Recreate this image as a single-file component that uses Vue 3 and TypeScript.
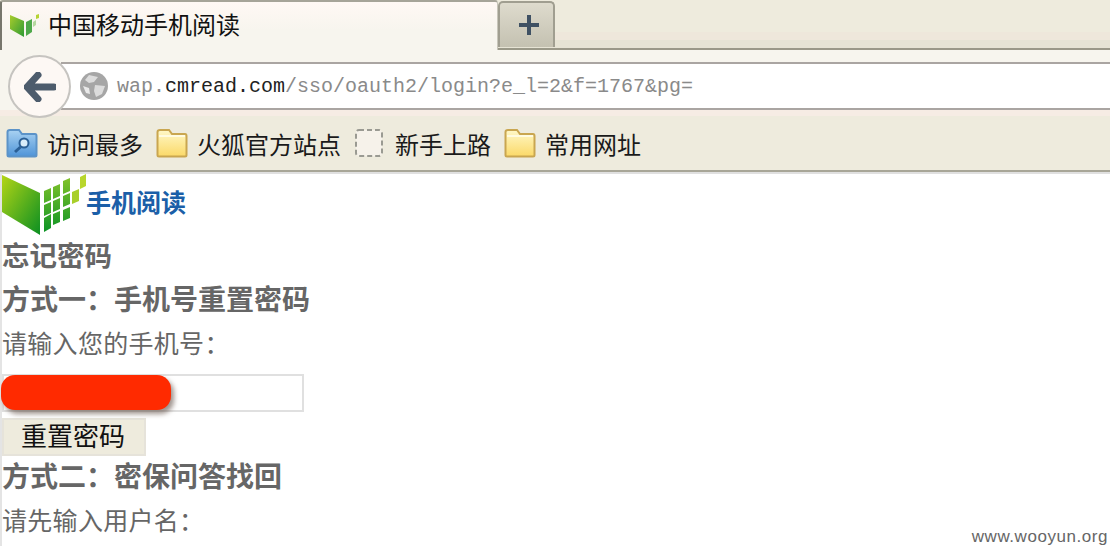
<script setup lang="ts">
interface Bookmark {
  label: string;
  icon: 'search' | 'folder' | 'blank';
}

const bookmarks: Bookmark[] = [
  { label: '访问最多', icon: 'search' },
  { label: '火狐官方站点', icon: 'folder' },
  { label: '新手上路', icon: 'blank' },
  { label: '常用网址', icon: 'folder' },
];

// skewed tiles of the logo, in page coordinates: x, y, width, height, rise
const tiles: number[][] = [
  [44, 191, 7, 12, -3],
  [44, 205, 7, 11, -3],
  [44, 218, 7, 14, -4],
  [53, 187, 7, 12, -3],
  [53, 201, 7, 11, -3],
  [53, 214, 7, 11, -3],
  [63, 181, 7, 13, -3],
  [63, 196, 7, 11, -3],
  [63, 210, 7, 11, -3],
];
</script>

<template>
  <div class="window">
    <div class="tabstrip">
      <div class="tab">
        <svg class="favicon" viewBox="0 0 30 24">
          <defs>
            <linearGradient id="favbook" x1="0" y1="0" x2="1" y2="1">
              <stop offset="0" stop-color="#a9cc2c" />
              <stop offset="1" stop-color="#2d9a34" />
            </linearGradient>
          </defs>
          <path d="M0 2 L14 8 L14 24 L0 16 Z" fill="url(#favbook)" />
          <path d="M16 9 L22 6 L22 19 L16 23 Z" fill="#4ea84a" />
          <path d="M23 9 L26 7 L26 12 L23 14 Z" fill="#b5d8a0" />
          <path d="M26 2 L29 1 L29 5 L26 6 Z" fill="#b5d334" />
        </svg>
        <span class="tab-title">中国移动手机阅读</span>
      </div>
      <div class="newtab">
        <svg viewBox="0 0 20 20" width="20" height="20">
          <path d="M10 0 V20 M0 10 H20" stroke="#3f5163" stroke-width="4" />
        </svg>
      </div>
    </div>

    <div class="navbar">
      <div class="back">
        <svg viewBox="0 0 32 30" width="32" height="30">
          <path d="M14 3 L3 15 L14 27 M4 15 H30" fill="none" stroke="#4d5c6c" stroke-width="7" stroke-linejoin="round" stroke-linecap="round" />
        </svg>
      </div>
      <div class="urlbar">
        <svg class="globe" viewBox="0 0 28 28" width="28" height="28">
          <circle cx="14" cy="14" r="14" fill="#a6a6a6" />
          <path d="M9 3 L18 5 L14 10 L9 11 L5 8 Z M15 13 L25 14 L22 22 L16 25 L14 19 Z" fill="#dcdcdc" />
          <path d="M3 14 L9 16 L10 22 L6 21 Z" fill="#e9e9e9" />
        </svg>
        <span class="url"><span>wap.</span><b>cmread.com</b><span>/sso/oauth2/login?e_l=2&amp;f=1767&amp;pg=</span></span>
      </div>
    </div>

    <div class="bookmarks">
      <div v-for="item in bookmarks" :key="item.label" class="bookmark">
        <svg class="bm-icon" viewBox="0 0 32 30" width="32" height="30">
          <defs>
            <linearGradient id="yellow" x1="0" y1="0" x2="0" y2="1">
              <stop offset="0" stop-color="#fff8c8" />
              <stop offset="1" stop-color="#fbd968" />
            </linearGradient>
            <linearGradient id="blue" x1="0" y1="0" x2="0" y2="1">
              <stop offset="0" stop-color="#a9d2f2" />
              <stop offset="1" stop-color="#4f94d8" />
            </linearGradient>
          </defs>
          <template v-if="item.icon === 'folder'">
            <path d="M1.5 27 V4 Q1.5 2 4 2 H13 L16 6 H29 Q30.5 6 30.5 8 V27 Q30.5 28.5 29 28.5 H3 Q1.5 28.5 1.5 27 Z" fill="url(#yellow)" stroke="#c9a650" stroke-width="2" />
            <path d="M3 8 H29" stroke="#fffbe0" stroke-width="2" />
          </template>
          <template v-else-if="item.icon === 'search'">
            <path d="M1.5 27 V4 Q1.5 2 4 2 H13 L16 6 H29 Q30.5 6 30.5 8 V27 Q30.5 28.5 29 28.5 H3 Q1.5 28.5 1.5 27 Z" fill="url(#blue)" stroke="#5c93c8" stroke-width="2" />
            <circle cx="18" cy="15" r="4.5" fill="#d8ecfa" stroke="#2a5f96" stroke-width="2" />
            <path d="M14.5 19 L9 24" stroke="#2a5f96" stroke-width="3" />
          </template>
          <rect v-else x="2" y="2" width="26" height="26" rx="3" fill="#f6f2ea" stroke="#9a9a92" stroke-width="2" stroke-dasharray="5 3" />
        </svg>
        <span>{{ item.label }}</span>
      </div>
    </div>

    <main class="page">
      <div class="logo">
        <svg viewBox="2 170 84 68" width="84" height="68">
          <defs>
            <linearGradient id="book" x1="0" y1="0" x2="1" y2="1">
              <stop offset="0" stop-color="#b4d516" />
              <stop offset="1" stop-color="#0b8f22" />
            </linearGradient>
            <linearGradient id="tile" gradientUnits="userSpaceOnUse" x1="0" y1="176" x2="0" y2="232">
              <stop offset="0" stop-color="#86c42a" />
              <stop offset="1" stop-color="#0d9426" />
            </linearGradient>
          </defs>
          <path d="M2 175 L40 193 L40 235 L2 212 Z" fill="url(#book)" />
          <path
            v-for="(t, i) in tiles"
            :key="i"
            :d="`M${t[0]} ${t[1]} l${t[2]} ${t[4]} v${t[3]} l${-t[2]} ${-t[4]} Z`"
            fill="url(#tile)"
          />
          <path d="M72 192 L79 189 V201 L72 204 Z" fill="#a9cf2a" />
          <path d="M80 177 L86 174 V186 L80 189 Z" fill="#b8d62c" />
        </svg>
        <span class="logo-text">手机阅读</span>
      </div>

      <h1>忘记密码</h1>
      <h2>方式一：手机号重置密码</h2>
      <p>请输入您的手机号：</p>
      <div class="phone">
        <input type="text" />
        <div class="scribble"></div>
      </div>
      <button type="button">重置密码</button>
      <h2 class="second">方式二：密保问答找回</h2>
      <p>请先输入用户名：</p>
    </main>

    <div class="watermark">www.wooyun.org</div>
  </div>
</template>

<style scoped>
.window {
  position: relative;
  width: 1110px;
  height: 546px;
  overflow: hidden;
  background: #fff;
  font-family: "Noto Sans CJK SC", "Liberation Sans", sans-serif;
}

.tabstrip {
  display: flex;
  height: 50px;
  box-sizing: border-box;
  border-bottom: 2px solid #9a9888;
  background: linear-gradient(#eeebdd 0, #eeebdd 32px, #eee7db 32px, #eee7db 40px, #e6e3d4 40px);
}

.tab {
  display: flex;
  align-items: center;
  gap: 8px;
  width: 498px;
  height: 50px;
  box-sizing: border-box;
  padding: 0 0 0 8px;
  border-top: 2px solid #a6a498;
  border-left: 2px solid #77766c;
  border-right: 1px solid #c8c6ba;
  border-radius: 3px 3px 0 0;
  background: linear-gradient(#fff8f4, #f7f5ee 60%);
  font-size: 24px;
  color: #111;
}

.tab-title {
  margin: -6px 0 0 0;
}

.favicon {
  width: 30px;
  height: 24px;
  margin-top: -2px;
}

.newtab {
  display: flex;
  align-items: center;
  justify-content: center;
  width: 57px;
  height: 46px;
  margin-top: 1px;
  padding-left: 4px;
  box-sizing: border-box;
  border: 2px solid #a09e90;
  border-bottom: none;
  border-radius: 5px 5px 0 0;
  background: linear-gradient(#dedbcd, #c4c1b1);
}

.navbar {
  display: flex;
  height: 60px;
  padding-top: 12px;
  box-sizing: border-box;
  background: #f7f5ee;
}

.back {
  position: relative;
  z-index: 1;
  display: flex;
  flex: none;
  align-items: center;
  justify-content: center;
  width: 63px;
  height: 63px;
  margin: -7px -10px -8px 8px;
  box-sizing: border-box;
  border: 2px solid #c6c4c0;
  border-radius: 50%;
  background: #fdf8f4;
}

.urlbar {
  flex: 1;
  display: flex;
  align-items: center;
  padding-left: 19px;
  border-top: 2px solid #aaa5a2;
  border-bottom: 2px solid #aaa5a2;
  background: #fff;
}

.globe {
  flex: none;
}

.url {
  margin-left: 9px;
  font-family: "Liberation Mono", monospace;
  font-size: 20px;
  color: #8a8a8a;
  white-space: pre;
}

.url b {
  font-weight: 400;
  color: #222;
}

.bookmarks {
  display: flex;
  align-items: center;
  gap: 13px;
  height: 62px;
  padding: 6px 0 0 6px;
  box-sizing: border-box;
  border-bottom: 2px solid #a8a698;
  background: linear-gradient(#f6ece4 0, #f6ece4 6px, #eeebdd 6px);
  font-size: 24px;
  color: #1a1a1a;
}

.bookmark {
  display: flex;
  align-items: center;
  gap: 9px;
}

.page {
  height: 374px;
  box-sizing: border-box;
  border-left: 2px solid #e4e4e4;
  border-top: 2px solid #e0e0e0;
  color: #666;
  font-size: 25px;
}

.logo {
  display: flex;
  align-items: center;
  height: 60px;
}

.logo-text {
  margin: -6px 0 0 0;
  font-size: 25px;
  font-weight: 700;
  line-height: 30px;
  color: #1b5fa8;
}

h1,
h2,
p {
  margin: 0;
  height: 44px;
  line-height: 40px;
  white-space: nowrap;
}

h1,
h2 {
  font-size: 28px;
  font-weight: 700;
}

h1 {
  font-size: 27.5px;
}

p {
  letter-spacing: 0.3px;
}

.phone {
  position: relative;
  width: 302px;
  margin-top: 8px;
}

input {
  display: block;
  width: 302px;
  height: 38px;
  margin: 0;
  box-sizing: border-box;
  border: 2px solid #e0e0e0;
  background: #fff;
}

.scribble {
  position: absolute;
  top: 1px;
  left: -1px;
  width: 170px;
  height: 35px;
  border-radius: 14px;
  background: #ff2a00;
  box-shadow: 3px 4px 5px rgba(80, 60, 50, 0.55);
}

button {
  display: block;
  width: 144px;
  height: 38px;
  margin: 6px 0 0;
  padding: 0 2px 4px 0;
  border: 2px solid #e6e3da;
  background: #eeebdd;
  color: #111;
  font-family: inherit;
  font-size: 26px;
  line-height: 30px;
}

.second {
  height: 43px;
  line-height: 38px;
}

.watermark {
  position: absolute;
  right: 2px;
  bottom: 0;
  font-family: "Liberation Sans", sans-serif;
  font-size: 17px;
  line-height: 18px;
  color: #666;
  letter-spacing: 0.55px;
}
</style>
